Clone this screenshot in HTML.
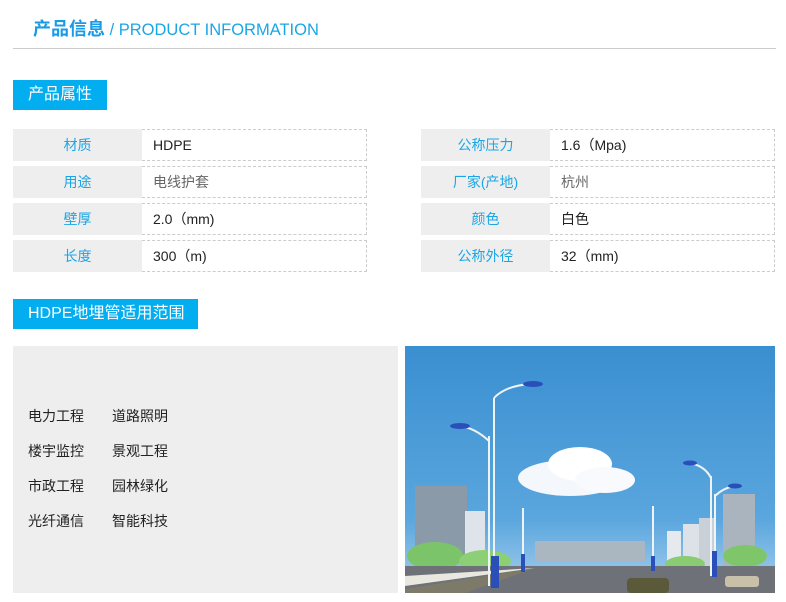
<!DOCTYPE html>
<html><head><meta charset="utf-8"><style>
*{margin:0;padding:0;box-sizing:border-box}
body{width:786px;height:602px;background:#fff;font-family:"Liberation Sans","Noto Sans CJK SC",sans-serif;position:relative;overflow:hidden}
.t{position:absolute;left:33px;top:15px;font-size:16.5px;color:#1aa6e6;white-space:nowrap}
.t b{font-size:18px;font-weight:bold;color:#1a9be6}
.line{position:absolute;left:13px;top:48px;width:763px;height:1px;background:#ccc}
.tag{position:absolute;left:13px;height:30px;background:#03aef0;color:#fff;font-size:16px;line-height:30px;padding-left:15px}
.row{position:absolute;height:32px;display:flex}
.lb{width:129px;background:#eee;color:#1aa6e6;font-size:14px;text-align:center;line-height:32px}
.vl{width:225px;border:1px dashed #ccc;border-left:none;font-size:14px;line-height:30px;padding-left:11px;color:#222}
.g{color:#666}
.box{position:absolute;left:13px;top:346px;width:385px;height:247px;background:#eee}
.box div{position:absolute;font-size:14px;color:#222;white-space:nowrap}
</style></head><body>
<div class="t"><b>产品信息</b> / PRODUCT INFORMATION</div>
<div class="line"></div>
<div class="tag" style="top:80px;width:94px">产品属性</div>

<div class="row" style="left:13px;top:129px"><div class="lb">材质</div><div class="vl">HDPE</div></div>
<div class="row" style="left:13px;top:166px"><div class="lb">用途</div><div class="vl g">电线护套</div></div>
<div class="row" style="left:13px;top:203px"><div class="lb">壁厚</div><div class="vl">2.0（mm)</div></div>
<div class="row" style="left:13px;top:240px"><div class="lb">长度</div><div class="vl">300（m)</div></div>

<div class="row" style="left:421px;top:129px"><div class="lb">公称压力</div><div class="vl">1.6（Mpa)</div></div>
<div class="row" style="left:421px;top:166px"><div class="lb">厂家(产地)</div><div class="vl g">杭州</div></div>
<div class="row" style="left:421px;top:203px"><div class="lb">颜色</div><div class="vl">白色</div></div>
<div class="row" style="left:421px;top:240px"><div class="lb">公称外径</div><div class="vl">32（mm)</div></div>

<div class="tag" style="top:299px;width:185px">HDPE地埋管适用范围</div>

<div class="box">
<div style="left:15px;top:60px">电力工程</div><div style="left:99px;top:60px">道路照明</div>
<div style="left:15px;top:95px">楼宇监控</div><div style="left:99px;top:95px">景观工程</div>
<div style="left:15px;top:130px">市政工程</div><div style="left:99px;top:130px">园林绿化</div>
<div style="left:15px;top:165px">光纤通信</div><div style="left:99px;top:165px">智能科技</div>
</div>

<svg style="position:absolute;left:405px;top:346px" width="370" height="247" viewBox="0 0 370 247">
<defs><linearGradient id="s" x1="0" y1="0" x2="0" y2="1"><stop offset="0" stop-color="#3a8fd0"/><stop offset="0.7" stop-color="#5aa6de"/><stop offset="1" stop-color="#a9d0ee"/></linearGradient></defs>
<rect width="370" height="247" fill="url(#s)"/>
<rect x="10" y="140" width="52" height="70" fill="#8a9aa8"/>
<rect x="60" y="165" width="20" height="45" fill="#dfe4ea"/>
<rect x="130" y="195" width="110" height="20" fill="#aab6c0"/>
<rect x="262" y="185" width="14" height="35" fill="#e6e9ee"/>
<rect x="278" y="178" width="16" height="42" fill="#dde2e8"/>
<rect x="294" y="172" width="16" height="48" fill="#c9d0d8"/>
<rect x="318" y="148" width="32" height="72" fill="#aab4bf"/>
<ellipse cx="165" cy="132" rx="52" ry="18" fill="#f4f7fb"/>
<ellipse cx="175" cy="118" rx="32" ry="17" fill="#fff"/>
<ellipse cx="200" cy="134" rx="30" ry="13" fill="#f8fafd"/>
<ellipse cx="30" cy="210" rx="28" ry="14" fill="#7cc46a"/>
<ellipse cx="80" cy="215" rx="26" ry="11" fill="#8ccf74"/>
<ellipse cx="340" cy="210" rx="22" ry="11" fill="#7fc66a"/>
<ellipse cx="280" cy="218" rx="20" ry="8" fill="#8acc72"/>
<rect x="0" y="220" width="370" height="27" fill="#6e7278"/>
<polygon points="0,230 130,222 0,240" fill="#e8e8e0"/>
<polygon points="0,243 130,222 60,247 0,247" fill="#7e7a6a"/>
<g stroke="#eef3f8" stroke-width="2" fill="none">
<line x1="89" y1="240" x2="89" y2="52"/><path d="M89 52 Q100 40 125 38"/>
<line x1="84" y1="240" x2="84" y2="90"/><path d="M84 95 Q70 82 55 80"/>
<line x1="306" y1="230" x2="306" y2="130"/><path d="M306 132 Q300 120 285 117"/>
<line x1="310" y1="230" x2="310" y2="148"/><path d="M310 150 Q318 142 330 140"/>
<line x1="248" y1="225" x2="248" y2="160"/><line x1="118" y1="225" x2="118" y2="162"/>
</g>
<g fill="#2a4fb8">
<rect x="86" y="210" width="8" height="32"/><rect x="307" y="205" width="5" height="26"/>
<rect x="116" y="208" width="4" height="18"/><rect x="246" y="210" width="4" height="15"/>
<ellipse cx="128" cy="38" rx="10" ry="3"/><ellipse cx="55" cy="80" rx="10" ry="3"/>
<ellipse cx="285" cy="117" rx="7" ry="2.5"/><ellipse cx="330" cy="140" rx="7" ry="2.5"/>
</g>
<rect x="222" y="232" width="42" height="15" rx="4" fill="#5a5a3a"/>
<rect x="320" y="230" width="34" height="11" rx="3" fill="#c8c0a8"/>
</svg>
</body></html>
